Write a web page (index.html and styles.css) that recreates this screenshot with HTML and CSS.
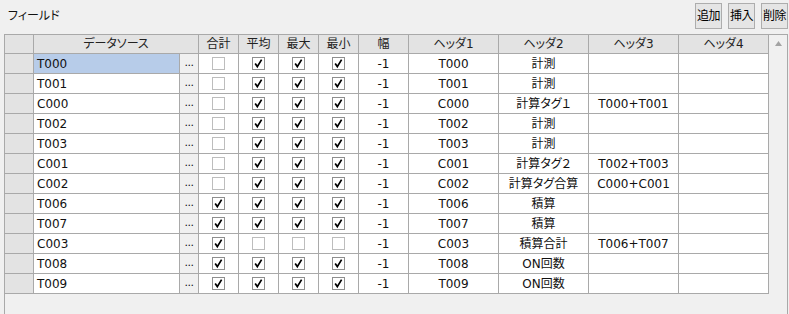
FILE: index.html
```html
<!DOCTYPE html>
<html lang="ja">
<head>
  <meta charset="UTF-8" />
  <title>フィールド</title>
  <link rel="stylesheet" href="styles.css">
</head>
<body>

  <div class="toolbar">
    <span class="title">フィールド</span>
    <div class="buttons">
      <button class="btn">追加</button>
      <button class="btn">挿入</button>
      <button class="btn">削除</button>
    </div>
  </div>

  <div class="frame">
    <div class="grid" id="grid">
      <div class="cell head"></div>
      <div class="cell head span2">データソース</div>
      <div class="cell head">合計</div>
      <div class="cell head">平均</div>
      <div class="cell head">最大</div>
      <div class="cell head">最小</div>
      <div class="cell head">幅</div>
      <div class="cell head">ヘッダ1</div>
      <div class="cell head">ヘッダ2</div>
      <div class="cell head">ヘッダ3</div>
      <div class="cell head">ヘッダ4</div>
    </div>
    <div class="vscroll">
      <svg class="arrow" width="7" height="5" viewBox="0 0 7 5"><path d="M3.5 0 L7 5 L0 5 Z" fill="#a3a3a3"/></svg>
    </div>
  </div>

  <script>
    // name, sum, avg, max, min, width, h1, h2, h3, h4
    var rows = [
      ["T000", 0, 1, 1, 1, "-1", "T000", "計測", "", ""],
      ["T001", 0, 1, 1, 1, "-1", "T001", "計測", "", ""],
      ["C000", 0, 1, 1, 1, "-1", "C000", "計算タグ１", "T000+T001", ""],
      ["T002", 0, 1, 1, 1, "-1", "T002", "計測", "", ""],
      ["T003", 0, 1, 1, 1, "-1", "T003", "計測", "", ""],
      ["C001", 0, 1, 1, 1, "-1", "C001", "計算タグ２", "T002+T003", ""],
      ["C002", 0, 1, 1, 1, "-1", "C002", "計算タグ合算", "C000+C001", ""],
      ["T006", 1, 1, 1, 1, "-1", "T006", "積算", "", ""],
      ["T007", 1, 1, 1, 1, "-1", "T007", "積算", "", ""],
      ["C003", 1, 0, 0, 0, "-1", "C003", "積算合計", "T006+T007", ""],
      ["T008", 1, 1, 1, 1, "-1", "T008", "ON回数", "", ""],
      ["T009", 1, 1, 1, 1, "-1", "T009", "ON回数", "", ""]
    ];

    var tick = '<svg width="13" height="13" viewBox="0 0 13 13"><path d="M3.2 6.6 L5.3 9.6 L9.6 2.6" fill="none" stroke="#000" stroke-width="1.7"/></svg>';

    var grid = document.getElementById("grid");
    var html = "";

    rows.forEach(function (r, i) {
      html += '<div class="cell rowhead"></div>';
      html += '<div class="cell name' + (i === 0 ? ' selected' : '') + '">' + r[0] + '</div>';
      html += '<div class="cell dots">...</div>';
      for (var c = 1; c <= 4; c++) {
        html += '<div class="cell"><span class="check' + (r[c] ? ' on' : '') + '">' + (r[c] ? tick : '') + '</span></div>';
      }
      for (var k = 5; k <= 9; k++) {
        html += '<div class="cell">' + r[k] + '</div>';
      }
    });

    grid.insertAdjacentHTML("beforeend", html);
  </script>
</body>
</html>
```

FILE: styles.css
```css
body {
  margin: 0;
  background-color: #f0f0f0;
  color: #111;
  font-family: "DejaVu Sans", "Noto Sans CJK JP", sans-serif;
  font-size: 12px;
  font-feature-settings: "palt";
  overflow: hidden;
}

/* Top bar */
.toolbar {
  height: 34px;
  display: flex;
  justify-content: space-between;
  align-items: flex-start;
}

.title {
  margin: 8px 0 0 8px;
  line-height: 16px;
}

.buttons {
  display: flex;
  gap: 6px;
  margin: 3px 1px 0 0;
}

.btn {
  width: 27px;
  height: 26px;
  padding: 0;
  border: 1px solid #adadad;
  background-color: #e5e5e5;
  font-family: inherit;
  font-size: 12px;
  line-height: 14px;
  color: #000;
  letter-spacing: -0.5px;
}

/* Grid */
.frame {
  margin-left: 4px;
  width: 782px;
  height: 290px;
  border: 1px solid #a9a9a9;
  border-bottom: none;
  display: flex;
}

.grid {
  display: grid;
  grid-template-columns: 29px 146px 19px 40px 40px 40px 40px 50px 90px 90px 90px 90px;
  grid-template-rows: 19px;
  grid-auto-rows: 20px;
  align-content: start;
}

.cell {
  box-sizing: border-box;
  border-right: 1px solid #a9a9a9;
  border-bottom: 1px solid #a9a9a9;
  background-color: #fff;
  display: flex;
  align-items: center;
  justify-content: center;
  line-height: 14px;
  white-space: nowrap;
  overflow: hidden;
}

.head {
  background-color: #e3e3e3;
  color: #222;
}

.span2 {
  grid-column: span 2;
}

.rowhead {
  background-color: #e3e3e3;
}

.name {
  justify-content: flex-start;
  padding-left: 3px;
}

.selected {
  background-color: #b7cce9;
}

.dots {
  background-color: #f0f0f0;
  font-size: 11px;
  align-items: flex-end;
  padding-bottom: 3px;
  letter-spacing: -0.5px;
}

.check {
  width: 13px;
  height: 13px;
  box-sizing: border-box;
  border: 1px solid #bdbdbd;
  background-color: #fff;
  position: relative;
}

.check.on {
  border-color: #8f8f8f;
}

.check svg {
  position: absolute;
  left: -1px;
  top: -1px;
}

.vscroll {
  width: 18px;
  display: flex;
  justify-content: center;
  align-items: flex-start;
}

.arrow {
  margin-top: 6px;
}
```
